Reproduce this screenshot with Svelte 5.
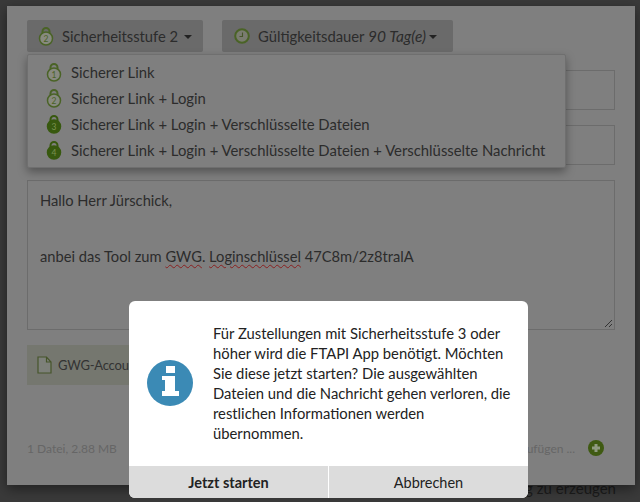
<script>
  const levels = [
    { n: 1, label: 'Sicherer Link', solid: false },
    { n: 2, label: 'Sicherer Link + Login', solid: false },
    { n: 3, label: 'Sicherer Link + Login + Verschlüsselte Dateien', solid: true },
    { n: 4, label: 'Sicherer Link + Login + Verschlüsselte Dateien + Verschlüsselte Nachricht', solid: true }
  ];
</script>

{#snippet lock(n, solid)}
  <svg class="lock" width="16" height="20" viewBox="0 0 16 20">
    <path d="M4.500 9V5.500a3.500 3.500 0 0 1 7 0V9" fill="none" stroke={solid ? '#38590f' : '#4a6326'} stroke-width="2"/>
    <circle cx="8" cy="12.500" r="6.500" fill={solid ? '#38590f' : '#888a80'} stroke={solid ? '#38590f' : '#4a6326'} stroke-width="1.500"/>
    <text x="8" y="16" text-anchor="middle" class="locknum" fill={solid ? '#7a9150' : '#4a6326'}>{n}</text>
  </svg>
{/snippet}

<div class="page">
  <div class="behind">g zu erzeugen</div>
  <main class="panel">
    <div class="toolbar">
      <div class="btn level">
        {@render lock(2, false)}
        <span>Sicherheitsstufe 2</span><i class="caret"></i>
      </div>
      <div class="btn validity">
        <svg width="16" height="16" viewBox="0 0 16 16">
          <circle cx="8" cy="8" r="6.800" fill="#7a7c70" stroke="#4a6326" stroke-width="2"/>
          <path d="M8.500 4.500V8.500H5.500" fill="none" stroke="#46552a" stroke-width="1.100"/>
        </svg>
        <span>Gültigkeitsdauer <em>90 Tag(e)</em></span><i class="caret tight"></i>
      </div>
    </div>

    <div class="field"></div>
    <div class="field"></div>
    <div class="message">
      <p>Hallo Herr Jürschick,</p>
      <p class="second">anbei das Tool zum <u>GWG</u>. <u>Loginschlüssel</u> 47C8m/2z8tralA</p>
      <svg class="grip" width="9" height="9" viewBox="0 0 9 9">
        <path d="M1 8 8 1M5 8 8 5" stroke="#333" stroke-width="1"/>
      </svg>
    </div>
    <div class="chip">
      <svg width="15" height="18" viewBox="0 0 15 18">
        <path d="M1 1h8.500L14 6v11H1z" fill="#7d807a"/>
        <path d="M1 1h8.500L14 6v11H1zM9.500 1v5H14" fill="none" stroke="#46552a" stroke-width="1.200"/>
      </svg>
      <span>GWG-Account</span>
    </div>
    <div class="footer">
      <span class="size">1 Datei, 2.88 MB</span>
      <span class="add">hinzufügen ...</span>
      <svg width="16" height="16" viewBox="0 0 16 16">
        <circle cx="8" cy="8" r="8" fill="#3f5a12"/>
        <path d="M8 4v8M4 8h8" stroke="#8f9a80" stroke-width="3"/>
      </svg>
    </div>

    <ul class="menu">
      {#each levels as l}
        <li>{@render lock(l.n, l.solid)}<span>{l.label}</span></li>
      {/each}
    </ul>
  </main>

  <section class="dialog">
    <div class="body">
      <svg class="info" width="46" height="46" viewBox="0 0 46 46">
        <circle cx="23" cy="23" r="23" fill="#3b8ab5"/>
        <path d="M19 6h9v7h-9zM15 16h13v15h4v5H15v-5h3V20h-3z" fill="#fff"/>
      </svg>
      <p>Für Zustellungen mit Sicherheitsstufe 3 oder höher wird die FTAPI App benötigt. Möchten Sie diese jetzt starten? Die ausgewählten Dateien und die Nachricht gehen verloren, die restlichen Informationen werden übernommen.</p>
    </div>
    <div class="actions">
      <button class="primary">Jetzt starten</button>
      <button>Abbrechen</button>
    </div>
  </section>
</div>

<style>
  :global(body) { margin: 0; background: #3a3a3a; }
  .page {
    position: relative;
    width: 640px;
    height: 502px;
    overflow: hidden;
    background: #3a3a3a;
    font-family: Lato, sans-serif;
    color: #2c2c2c;
    box-sizing: border-box;
    padding: 6px 5px 0 7px;
  }
  .behind {
    position: absolute;
    right: 24px;
    top: 479px;
    font-size: 15px;
    color: #1c1c1c;
  }
  .panel {
    position: relative;
    height: 479px;
    box-sizing: border-box;
    background: #7f7f7f;
    padding: 14px 20px 0;
    box-shadow: 0 4px 12px rgba(0, 0, 0, .45);
  }
  .toolbar { display: flex; gap: 19px; margin-bottom: 18px; }
  .btn {
    height: 32px;
    display: flex;
    align-items: center;
    background: #6a6a6a;
    border-radius: 2px;
    box-sizing: border-box;
  }
  .level { width: 176px; padding-left: 11px; font-size: 14.750px; gap: 8px; }
  .validity { width: 231px; padding-left: 12px; font-size: 14.800px; gap: 8px; }
  .validity em { font-style: italic; font-size: 15.500px; }
  .caret {
    width: 0; height: 0;
    border: 4px solid transparent;
    border-top-color: #222;
    border-bottom: 0;
    margin-left: -2px;
    margin-top: 2px;
  }
  .caret.tight { margin-left: -5px; }
  .field {
    height: 40px;
    border: 1px solid #6c6c6c;
    box-sizing: border-box;
    margin-bottom: 15px;
  }
  .message {
    position: relative;
    height: 150px;
    border: 1px solid #6c6c6c;
    box-sizing: border-box;
    padding: 9px 12px;
    font-size: 14.700px;
    margin-bottom: 15px;
  }
  .message p { margin: 0; line-height: 20px; }
  .message .second { margin-top: 36px; }
  .message u { text-decoration: underline wavy #8a2020 1px; text-underline-offset: 2px; }
  .grip { position: absolute; right: 1px; bottom: 1px; }
  .chip {
    width: 320px;
    height: 40px;
    background: #75776f;
    display: flex;
    align-items: center;
    gap: 6px;
    padding-left: 10px;
    box-sizing: border-box;
    font-size: 13px;
    letter-spacing: -.2px;
    color: #333;
  }
  .footer {
    display: flex;
    align-items: center;
    margin-top: 55px;
    font-size: 12px;
    color: #666;
  }
  .size { flex: 1; }
  .add { margin-right: 13px; }
  .footer svg { margin-right: 11px; }
  .menu {
    position: absolute;
    left: 20px;
    top: 48px;
    width: 539px;
    height: 114px;
    box-sizing: border-box;
    margin: 0;
    padding: 4px 0 0 18px;
    list-style: none;
    background: #7f7f7f;
    border: 1px solid #6f6f6f;
    border-radius: 2px;
    box-shadow: 0 4px 10px rgba(0, 0, 0, .35);
    font-size: 14.850px;
  }
  .menu li { height: 26px; display: flex; align-items: center; gap: 9px; white-space: nowrap; }
  .locknum { font-size: 8.500px; font-family: Lato, sans-serif; }
  .dialog {
    position: absolute;
    left: 129px;
    top: 301px;
    width: 399px;
    height: 197px;
    background: #fff;
    border-radius: 6px;
    overflow: hidden;
    display: flex;
    flex-direction: column;
    color: #222;
  }
  .body { flex: 1; display: flex; align-items: center; padding: 0 14px 2px 18px; gap: 20px; }
  .info { flex: none; }
  .body p { margin: 0; font-size: 14.800px; line-height: 20px; }
  .actions { display: flex; height: 32px; background: #dcdcdc; }
  .actions button {
    flex: 1;
    border: 0;
    background: none;
    font: inherit;
    font-size: 14.500px;
    color: #222;
  }
  .actions .primary { font-weight: 700; border-right: 1px solid #fff; }
</style>
